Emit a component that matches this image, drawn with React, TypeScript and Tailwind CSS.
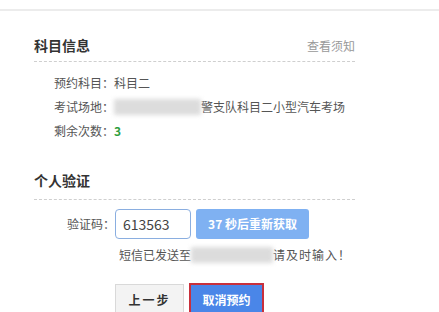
const font = { fontFamily: '"Microsoft YaHei", "Noto Sans CJK SC", sans-serif' };

const Blur = ({ w }: { w: string }) => (
  <span className={`inline-block h-[16px] ${w} align-middle bg-[#d4d4d4] blur-[2px] opacity-80`} />
);

export default function App() {
  return (
    <div className="w-[439px] h-[312px] overflow-hidden bg-white text-[12px] text-[#555]" style={font}>
      <div className="h-[9px]" />
      <div className="border-t-2 border-[#ececec]" />

      <div className="ml-[34px] w-[321px]">
        {/* 科目信息 */}
        <div className="mt-[24px] flex items-end justify-between border-b border-dashed border-[#cfcfcf] pb-[6px]">
          <h2 className="text-[14px] font-bold text-[#333] leading-[20px]">科目信息</h2>
          <span className="text-[12px] text-[#999] leading-[18px]">查看须知</span>
        </div>

        <div className="pl-[20px] pt-[11px] space-y-[6px] leading-[18px]">
          <div className="py-[0.5px]">预约科目：科目二</div>
          <div className="flex items-center">
            <span>考试场地：</span>
            <Blur w="w-[87px]" />
            <span>警支队科目二小型汽车考场</span>
          </div>
          <div>
            剩余次数：<span className="font-bold text-[#2e9e3e]">3</span>
          </div>
        </div>

        {/* 个人验证 */}
        <div className="mt-[30px] border-b border-dashed border-[#cfcfcf] pb-[9px]">
          <h2 className="text-[14px] font-bold text-[#333] leading-[20px]">个人验证</h2>
        </div>

        <div className="mt-[9px] flex items-center">
          <span className="w-[81px] text-right">验证码：</span>
          <div className="flex h-[30px] w-[76px] items-center rounded-[4px] border border-[#8aaee0] px-[7px] text-[14px] text-[#444]">
            613563
          </div>
          <button className="ml-[5px] h-[30px] w-[113px] rounded-[3px] bg-[#7fb1f2] text-[12px] font-bold text-white">
            37 秒后重新获取
          </button>
        </div>
        <div className="mt-[7px] flex items-center pl-[85px]">
          <span>短信已发送至</span>
          <Blur w="w-[82px]" />
          <span className="tracking-[1px]">请及时输入！</span>
        </div>

        <div className="mt-[19px] flex items-start pl-[81px] gap-[5px]">
          <button className="mt-[1px] h-[32px] w-[69px] border border-[#d9d9d9] bg-[#f3f3f3] text-[12px] font-bold text-[#333] tracking-[2px]">
            上一步
          </button>
          <button className="h-[33px] w-[75px] border-2 border-[#c9303c] bg-[#4a86e8] text-[12px] font-bold text-white">
            取消预约
          </button>
        </div>
      </div>
    </div>
  );
}
